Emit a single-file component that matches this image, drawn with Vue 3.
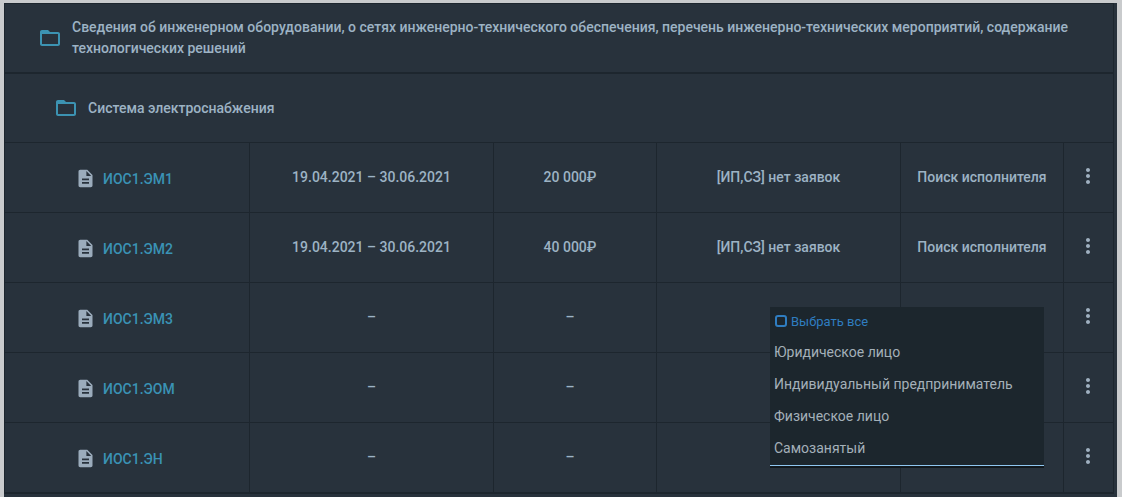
<script setup>
const rows = [
  { code: 'ИОС1.ЭМ1', date: '19.04.2021 – 30.06.2021', price: '20 000₽', type: '[ИП,СЗ] нет заявок', status: 'Поиск исполнителя' },
  { code: 'ИОС1.ЭМ2', date: '19.04.2021 – 30.06.2021', price: '40 000₽', type: '[ИП,СЗ] нет заявок', status: 'Поиск исполнителя' },
  { code: 'ИОС1.ЭМ3', date: '–', price: '–', type: '', status: '' },
  { code: 'ИОС1.ЭОМ', date: '–', price: '–', type: '', status: '' },
  { code: 'ИОС1.ЭН', date: '–', price: '–', type: '', status: '' }
]
const options = ['Юридическое лицо', 'Индивидуальный предприниматель', 'Физическое лицо', 'Самозанятый']
</script>

<template>
  <div class="page">
    <div class="panel">
      <div class="table">
        <div class="section">
          <svg class="folder" viewBox="0 0 24 24"><path d="M10 4H4c-1.1 0-2 .9-2 2v12c0 1.1.9 2 2 2h16c1.1 0 2-.9 2-2V8c0-1.1-.9-2-2-2h-8l-2-2zm10 14H4V8h16v10z" /></svg>
          <div class="section-title">Сведения об инженерном оборудовании, о сетях инженерно-технического обеспечения, перечень инженерно-технических мероприятий, содержание технологических решений</div>
        </div>
        <div class="subsection">
          <svg class="folder" viewBox="0 0 24 24"><path d="M10 4H4c-1.1 0-2 .9-2 2v12c0 1.1.9 2 2 2h16c1.1 0 2-.9 2-2V8c0-1.1-.9-2-2-2h-8l-2-2zm10 14H4V8h16v10z" /></svg>
          <div class="sub-title">Система электроснабжения</div>
        </div>
        <div v-for="row in rows" :key="row.code" class="row">
          <div class="cell code">
            <svg class="doc" viewBox="0 0 24 24"><path d="M14 2H6c-1.1 0-2 .9-2 2v16c0 1.1.9 2 2 2h12c1.1 0 2-.9 2-2V8l-6-6zm2 16H8v-2h8v2zm0-4H8v-2h8v2zm-3-5V3.5L18.5 9H13z" /></svg>
            <span class="code-text">{{ row.code }}</span>
          </div>
          <div class="cell">{{ row.date }}</div>
          <div class="cell price">{{ row.price }}</div>
          <div class="cell">{{ row.type }}</div>
          <div class="cell">{{ row.status }}</div>
          <div class="cell more">
            <svg class="dots" viewBox="0 0 24 24"><path d="M12 8c1.1 0 2-.9 2-2s-.9-2-2-2-2 .9-2 2 .9 2 2 2zm0 2c-1.1 0-2 .9-2 2s.9 2 2 2 2-.9 2-2-.9-2-2-2zm0 6c-1.1 0-2 .9-2 2s.9 2 2 2 2-.9 2-2-.9-2-2-2z" /></svg>
          </div>
        </div>
      </div>
      <div class="menu">
        <div class="select-all"><span class="check"></span>Выбрать все</div>
        <div v-for="o in options" :key="o" class="option">{{ o }}</div>
      </div>
    </div>
  </div>
</template>

<style>
html, body { margin: 0; background: #c9cbcd; overflow: hidden; }
</style>

<style scoped>
.page {
  width: 1122px;
  height: 497px;
  box-sizing: border-box;
  padding: 3px 5px 0 4px;
  background: #c9cbcd;
  overflow: hidden;
  font-family: Roboto, sans-serif;
}
.panel {
  position: relative;
  height: 494px;
  background: #28323c;
}
.table {
  width: 1110px;
  box-sizing: border-box;
  border: 1px solid #1d262e;
}
.section {
  height: 70px;
  box-sizing: border-box;
  display: flex;
  align-items: center;
  padding: 0 40px 1px 33px;
  border-bottom: 2px solid #1d262e;
}
.folder { width: 24px; height: 24px; fill: #3c93b2; flex: none; }
.section-title {
  margin-left: 10px;
  font-size: 14px;
  line-height: 21px;
  font-weight: 500;
  color: #9db3c4;
}
.subsection {
  height: 69px;
  box-sizing: border-box;
  display: flex;
  align-items: center;
  padding: 0 0 1px 49px;
  border-bottom: 1px solid #1d262e;
}
.sub-title {
  margin-left: 10px;
  font-size: 14px;
  font-weight: 500;
  color: #9db3c4;
}
.row {
  display: grid;
  grid-template-columns: 245px 244px 163px 244px 163px 49px;
  height: 70px;
  box-sizing: border-box;
  border-bottom: 1px solid #1d262e;
}
.cell {
  display: flex;
  align-items: center;
  justify-content: center;
  padding-bottom: 2px;
  border-right: 1px solid #1d262e;
  font-size: 14px;
  font-weight: 500;
  color: #9db3c4;
}
.code { justify-content: flex-start; padding: 0 0 0 70px; }
.price { padding-right: 10px; }
.more { border-right: 0; padding-bottom: 4px; padding-right: 2px; }
.doc { width: 21px; height: 21px; fill: #9bacbc; margin: 2px 7px 0 0; flex: none; }
.code-text { color: #3a92b5; font-size: 14px; margin-top: 2px; }
.dots { width: 24px; height: 24px; fill: #9fb0c0; }
.menu {
  position: absolute;
  left: 766px;
  top: 304px;
  width: 274px;
  height: 159px;
  box-sizing: border-box;
  padding-top: 6px;
  background: #1c262d;
  border-bottom: 1px solid #8fc6f0;
  box-shadow: 0 2px 0 #11181d;
  font-size: 14px;
  color: #a4b0b9;
}
.select-all {
  display: flex;
  align-items: center;
  height: 16px;
  padding-left: 5px;
  font-size: 13px;
  color: #2f7dc0;
  margin-bottom: 7px;
}
.check {
  width: 8px;
  height: 8px;
  margin-right: 4px;
  border: 2px solid #2f7dc0;
  border-radius: 3px;
}
.option {
  height: 32px;
  line-height: 32px;
  padding-left: 4px;
}
</style>
